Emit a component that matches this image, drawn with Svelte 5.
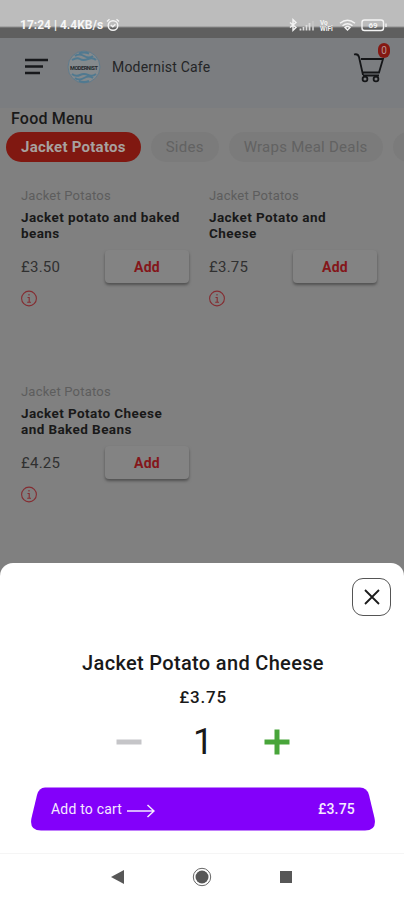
<script>
    let quantity = 1;
    let cartCount = 0;

    const categories = ["Jacket Potatos", "Sides", "Wraps Meal Deals"];
    let activeCategory = "Jacket Potatos";

    const items = [
        { name: "Jacket potato and baked beans", price: 3.5 },
        { name: "Jacket Potato and Cheese", price: 3.75 },
        { name: "Jacket Potato Cheese and Baked Beans", price: 4.25 },
    ];
    let selected = items[1];

    function formatPrice(value) {
        return "£" + value.toFixed(2);
    }

    function decrease() {
        if (quantity > 1) quantity -= 1;
    }
</script>

<div class="screen">
    <div class="status-bar">
        <span class="clock">17:24 | 4.4KB/s</span>
        <svg class="alarm" width="14" height="14" viewBox="0 0 14 14">
            <circle cx="7" cy="7.5" r="4.8" />
            <path d="M1 3.5L3.5 1.2M13 3.5L10.5 1.2M4.8 7l2 1.8 2.6-2.6" />
        </svg>
        <svg class="signals" width="100" height="14" viewBox="0 0 100 14">
            <path d="M2 4.5l6 5-3 2.8V1.7l3 2.8-6 5" />
            <path class="faint" d="M12.500 10.500v2M15.500 9v3.500M18.500 7v5.500M21.500 5v7.500" />
            <path class="off" d="M25 3v9.500" />
            <text x="32" y="6.5">Vo</text>
            <text x="32" y="12.8">WiFi</text>
            <path d="M52 5.200q7.500-6 15 0M54.500 7.700q5-4 10 0" />
            <path d="M57 9.500q2.500-2 5 0L59.500 12z" />
            <rect x="74" y="2" width="21.500" height="10.500" rx="2.500" />
            <path d="M98 5.5v3.5" />
            <text class="level" x="85" y="10.2">69</text>
        </svg>
    </div>

    <header>
        <svg class="menu" width="24" height="18" viewBox="0 0 24 18">
            <path d="M0 2h23M0 8.5h18M0 15h15" />
        </svg>
        <svg class="logo" width="34" height="34" viewBox="0 0 34 34">
            <circle class="disc" cx="17" cy="17" r="16" />
            <path class="wave" d="M8 6q4-3 9 0t9 0M5 10q5-3 8-1t8 0 8 1M12 3.500q5-2 10 0" />
            <path class="wave" d="M5 24q4 3 8 1t8 0 8-1M8 28q4 3 9 0t9 0M12 31q5 2 10 0" />
            <text x="17" y="19.500" textLength="28">MODERNIST</text>
        </svg>
        <span class="cafe">Modernist Cafe</span>
        <div class="cart">
            <svg width="34" height="34" viewBox="0 0 34 34">
                <path d="M1 4.500q4-1 5 2.500l4 18M8 9h22l-4 13.500H9.500M10 25.500h16" />
                <circle cx="12" cy="29" r="2.400" />
                <circle cx="23" cy="29" r="2.400" />
            </svg>
            <span class="badge">{cartCount}</span>
        </div>
    </header>

    <main>
        <h1>Food Menu</h1>
        <nav>
            {#each categories as category}
                <button
                    class="category"
                    class:active={category === activeCategory}
                    on:click={() => (activeCategory = category)}
                >
                    {category}
                </button>
            {/each}
            <button class="category more" aria-label="More"></button>
        </nav>

        <div class="items">
            {#each items as item}
                <article>
                    <p class="group">{activeCategory}</p>
                    <h2>{item.name}</h2>
                    <div class="buy">
                        <span class="price">{formatPrice(item.price)}</span>
                        <button class="add" on:click={() => (selected = item)}>Add</button>
                    </div>
                    <svg class="info" width="17" height="17" viewBox="0 0 17 17">
                        <circle cx="8" cy="8.5" r="7.400" />
                        <path d="M8 4v1.500M6.500 7.500h1.700v4.500M6.200 12.200h3.800" />
                    </svg>
                </article>
            {/each}
        </div>
    </main>

    <section class="sheet">
        <button class="close" aria-label="Close">
            <svg width="16" height="16" viewBox="0 0 16 16">
                <path d="M1 1l14 14M15 1L1 15" />
            </svg>
        </button>
        <h3>{selected.name}</h3>
        <p class="sheet-price">{formatPrice(selected.price)}</p>
        <div class="stepper">
            <button aria-label="Decrease" on:click={decrease}>
                <svg width="26" height="26" viewBox="0 0 26 26">
                    <path class="minus" d="M.5 13h25" />
                </svg>
            </button>
            <span class="quantity">{quantity}</span>
            <button aria-label="Increase" on:click={() => (quantity += 1)}>
                <svg width="26" height="26" viewBox="0 0 26 26">
                    <path class="plus" d="M.5 13h25M13 .5v25" />
                </svg>
            </button>
        </div>
        <button class="checkout">
            <svg class="shape" width="344" height="44" viewBox="0 0 344 44">
                <path d="M14 .5H329Q336 .5 338 8L343.500 31Q346 43.500 334 43.500H10Q-2 43.500 .5 31L6 8Q8 .5 14 .5Z" />
            </svg>
            <span class="label">Add to cart</span>
            <svg class="arrow" width="29" height="14" viewBox="0 0 29 14">
                <path d="M1 7h27M21.500 1l6.500 6-6.500 6" />
            </svg>
            <span class="total">{formatPrice(selected.price * quantity)}</span>
        </button>
    </section>

    <footer>
        <svg width="14" height="16" viewBox="0 0 14 16">
            <path d="M0 8L13 1v14z" />
        </svg>
        <svg width="20" height="20" viewBox="0 0 20 20">
            <circle class="ring" cx="10" cy="10" r="8.700" />
            <circle cx="10" cy="10" r="6.500" />
        </svg>
        <svg width="12" height="12" viewBox="0 0 12 12">
            <path d="M0 0h12v12H0z" />
        </svg>
    </footer>
</div>

<style>
    :global(body) {
        margin: 0;
        background: #808080;
    }

    .screen {
        width: 404px;
        height: 900px;
        display: flex;
        flex-direction: column;
        overflow: hidden;
        background: #808080;
        font-family: Roboto, sans-serif;
        color: #191919;
    }

    h1,
    h2,
    h3,
    p {
        margin: 0;
    }

    button {
        border: none;
        padding: 0;
        background: none;
        font-family: inherit;
        color: inherit;
    }

    svg {
        display: block;
        flex: none;
        fill: none;
    }

    .status-bar {
        height: 38px;
        flex: none;
        box-sizing: border-box;
        display: flex;
        align-items: center;
        padding: 11px 16px 0 20px;
        background: linear-gradient(#bcbcbc 26px, #5f5f5f 28px);
        color: #f6f6f6;
    }

    .clock {
        width: 85px;
        font-size: 12px;
        font-weight: 700;
        white-space: nowrap;
    }

    .alarm,
    .signals {
        stroke: #f3f3f3;
        stroke-width: 1.4;
    }

    .alarm {
        margin-left: 1px;
    }

    .signals {
        margin-left: auto;
    }

    .signals .faint {
        stroke-width: 1.8;
        stroke: #dcdcdc;
    }

    .signals .off {
        stroke-width: 1.8;
        stroke: #c6c6c6;
    }

    .signals text {
        font-size: 6.5px;
        font-weight: 700;
        fill: #f3f3f3;
        stroke: none;
    }

    .signals .level {
        font-size: 8px;
        text-anchor: middle;
    }

    header {
        height: 70px;
        flex: none;
        box-sizing: border-box;
        display: flex;
        align-items: center;
        padding: 0 13px 12px 25px;
        background: #7b7d80;
    }

    .menu {
        stroke: #17181b;
        stroke-width: 2.6;
    }

    .logo {
        margin-left: 18px;
    }

    .disc {
        fill: #858a8d;
        stroke: #607b8c;
        stroke-width: 1;
    }

    .wave {
        stroke: #507990;
        stroke-width: 2;
    }

    .logo text {
        font-size: 5.5px;
        font-weight: 700;
        fill: #24292d;
        text-anchor: middle;
    }

    .cafe {
        margin-left: 11px;
        font-size: 14px;
        letter-spacing: 0.2px;
        color: #242527;
    }

    .cart {
        position: relative;
        margin-left: auto;
        width: 38px;
        height: 34px;
        stroke: #151618;
        stroke-width: 1.8;
    }

    .badge {
        position: absolute;
        top: -7px;
        right: 1px;
        width: 12px;
        height: 15px;
        border-radius: 6px;
        background: #851812;
        color: #b79492;
        font-size: 10px;
        line-height: 15px;
        text-align: center;
    }

    main {
        height: 455px;
        flex: none;
    }

    h1 {
        padding: 1px 0 0 11px;
        font-size: 16px;
        line-height: 19px;
        font-weight: 500;
        letter-spacing: 0.2px;
    }

    nav {
        display: flex;
        gap: 10px;
        margin-top: 4px;
        padding-left: 6px;
        overflow: hidden;
    }

    .category {
        height: 30px;
        flex: none;
        padding: 0 15px;
        border-radius: 15px;
        background: #7b7b7b;
        color: #626262;
        font-size: 15px;
        letter-spacing: 0.25px;
    }

    .category.active {
        background: #801811;
        color: #a7a19f;
        font-weight: 700;
    }

    .category.more {
        width: 80px;
    }

    .items {
        display: grid;
        grid-template-columns: 168px 168px;
        grid-auto-rows: 196px;
        column-gap: 20px;
        padding: 25px 0 0 21px;
    }

    .group {
        font-size: 13px;
        line-height: 17px;
        letter-spacing: 0.2px;
        color: #5d5d5d;
    }

    h2 {
        width: 162px;
        margin-top: 5px;
        font-size: 13.5px;
        line-height: 16px;
        font-weight: 700;
        letter-spacing: 0.42px;
    }

    .buy {
        display: flex;
        align-items: center;
        justify-content: space-between;
        margin-top: 9px;
    }

    .price {
        font-size: 15px;
        letter-spacing: 0.25px;
        color: #303030;
    }

    .add {
        width: 84px;
        height: 33px;
        border-radius: 4px;
        background: #838383;
        box-shadow: 0 2px 3px #505050;
        color: #84161a;
        font-size: 14px;
        font-weight: 700;
        letter-spacing: 0.3px;
    }

    .info {
        margin-top: 7px;
        stroke: #842c31;
        stroke-width: 1.1;
    }

    .sheet {
        height: 290px;
        flex: none;
        box-sizing: border-box;
        display: flex;
        flex-direction: column;
        align-items: center;
        padding: 15px 0 0 2px;
        border-radius: 13px 13px 0 0;
        background: #fff;
    }

    .close {
        width: 39px;
        height: 38px;
        display: grid;
        place-items: center;
        align-self: flex-end;
        margin-right: 13px;
        border: 1px solid #555;
        border-radius: 11px;
        stroke: #1c1c1c;
        stroke-width: 1.8;
    }

    h3 {
        margin-top: 35px;
        font-size: 20px;
        line-height: 24px;
        font-weight: 500;
        letter-spacing: 0.33px;
    }

    .sheet-price {
        margin-top: 12px;
        font-size: 17px;
        line-height: 20px;
        font-weight: 500;
        letter-spacing: 0.8px;
    }

    .stepper {
        display: flex;
        align-items: center;
        justify-content: space-between;
        width: 174px;
        height: 42px;
        margin-top: 14px;
    }

    .quantity {
        font-size: 36px;
        line-height: 42px;
    }

    .minus {
        stroke: #c5c5c8;
        stroke-width: 5;
    }

    .plus {
        stroke: #48a53a;
        stroke-width: 5;
    }

    .checkout {
        display: grid;
        grid-template-columns: 75px 1fr auto;
        align-items: center;
        width: 344px;
        height: 44px;
        margin-top: 24px;
        padding: 0 20px;
        color: #f5eaff;
        font-size: 14px;
        letter-spacing: 0.2px;
    }

    .shape {
        grid-area: 1 / 1 / 2 / 4;
        margin-left: -20px;
        margin-right: -20px;
        fill: #8300fa;
    }

    .label {
        grid-area: 1 / 1;
        text-align: left;
        white-space: nowrap;
    }

    .arrow {
        grid-area: 1 / 2;
        margin-top: 4px;
        stroke: #f5eaff;
        stroke-width: 1.5;
    }

    .total {
        grid-area: 1 / 3;
        font-weight: 500;
    }

    footer {
        height: 47px;
        flex: none;
        box-sizing: border-box;
        display: grid;
        grid-template-columns: 84px 84px 84px;
        justify-content: center;
        justify-items: center;
        align-items: center;
        border-top: 1px solid #f5f5f5;
        background: #fff;
    }

    footer svg {
        fill: #575757;
    }

    .ring {
        fill: none;
        stroke: #666;
        stroke-width: 1;
    }
</style>
